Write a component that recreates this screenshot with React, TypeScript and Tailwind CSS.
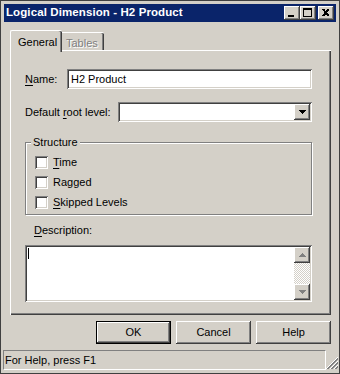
const raised =
  "shadow-[inset_-1px_-1px_0_#404040,inset_1px_1px_0_#ffffff,inset_-2px_-2px_0_#808080,inset_2px_2px_0_#d4d0c8]";
const sunken =
  "shadow-[inset_1px_1px_0_#808080,inset_-1px_-1px_0_#ffffff,inset_2px_2px_0_#404040,inset_-2px_-2px_0_#d4d0c8]";

function U({ children }: { children: string }) {
  return <span className="underline decoration-1 underline-offset-[2px]">{children}</span>;
}

function TitleButton({ kind }: { kind: "min" | "max" | "close" }) {
  return (
    <div className={`w-[16px] h-[14px] bg-[#d4d0c8] ${raised} flex items-center justify-center`}>
      <svg width="16" height="14" viewBox="0 0 16 14" shapeRendering="crispEdges">
        {kind === "min" && <rect x="4" y="9" width="6" height="2" fill="#000" />}
        {kind === "max" && (
          <g fill="#000">
            <rect x="3" y="2" width="9" height="2" />
            <rect x="3" y="2" width="1" height="9" />
            <rect x="11" y="2" width="1" height="9" />
            <rect x="3" y="10" width="9" height="1" />
          </g>
        )}
        {kind === "close" && (
          <g fill="#000">
            <path d="M4 3h2l1 1v1h1V4l1-1h2v1l-2 2v1l2 2v1H9L8 9H7l-1 1H4V9l2-2V6L4 4z" />
          </g>
        )}
      </svg>
    </div>
  );
}

function Checkbox({ label }: { label: React.ReactNode }) {
  return (
    <div className="flex items-center h-[13px] gap-[5px]">
      <div className={`w-[13px] h-[13px] bg-white ${sunken}`} />
      <span className="leading-[13px]">{label}</span>
    </div>
  );
}

function Arrow({ dir }: { dir: "up" | "down" }) {
  return (
    <svg width="7" height="4" viewBox="0 0 7 4" shapeRendering="crispEdges">
      {dir === "down" ? (
        <path d="M0 0h7v1H6v1H5v1H4v1H3V3H2V2H1V1H0z" fill="currentColor" />
      ) : (
        <path d="M3 0h1v1h1v1h1v1h1v1H0V3h1V2h1V1h1z" fill="currentColor" />
      )}
    </svg>
  );
}

function PushButton({ label, isDefault }: { label: string; isDefault?: boolean }) {
  return (
    <div
      className={`w-[75px] h-[23px] flex items-center justify-center bg-[#d4d0c8] ${
        isDefault ? "border border-black" : ""
      }`}
    >
      <div className={`w-full h-full flex items-center justify-center ${raised}`}>{label}</div>
    </div>
  );
}

export default function App() {
  return (
    <div className="w-[340px] h-[374px] bg-[#d4d0c8] border border-[#404040] p-[3px] flex flex-col text-[11px] text-black font-['Liberation_Sans',Arial,sans-serif] overflow-hidden">
      {/* Title bar */}
      <div className="h-[18px] bg-[#0a246a] flex items-center pl-[2px] pr-[2px]">
        <span className="flex-1 text-white font-bold text-[11.5px] leading-none tracking-[0.1px]">
          Logical Dimension - H2 Product
        </span>
        <div className="flex items-center">
          <TitleButton kind="min" />
          <TitleButton kind="max" />
          <div className="w-[2px]" />
          <TitleButton kind="close" />
        </div>
      </div>

      {/* Tabs */}
      <div className="flex items-end h-[20px] mt-[8px] ml-[6px]">
        <div className="relative z-10 h-[22px] -mb-[2px] w-[52px] bg-[#d4d0c8] border-t border-l border-white rounded-tl-[2px] rounded-tr-[2px] shadow-[inset_-1px_0_0_#404040,inset_-2px_0_0_#808080] flex items-start pt-[3px] pl-[7px]">
          General
        </div>
        <div className="h-[18px] w-[42px] border-t border-white shadow-[inset_-1px_0_0_#404040,inset_-2px_0_0_#808080] rounded-tr-[2px] pt-[2px] pl-[4px] text-[#808080] [text-shadow:1px_1px_0_#ffffff]">
          Tables
        </div>
      </div>

      {/* Tab panel */}
      <div className="ml-[6px] mr-[5px] h-[266px] border-t border-l border-white shadow-[inset_-1px_-1px_0_#404040,inset_-2px_-2px_0_#808080] pl-[14px] pr-[19px] pt-[18px] flex flex-col">
        <div className="flex items-center h-[20px]">
          <span className="w-[42px]">
            <U>N</U>ame:
          </span>
          <div className={`flex-1 h-[20px] bg-white ${sunken} flex items-center pl-[4px]`}>H2 Product</div>
        </div>

        <div className="flex items-center h-[20px] mt-[13px]">
          <span className="w-[93px]">
            Default <U>r</U>oot level:
          </span>
          <div className={`flex-1 h-[20px] bg-white ${sunken} flex items-center justify-end p-[2px]`}>
            <div className={`w-[16px] h-[16px] bg-[#d4d0c8] ${raised} flex items-center justify-center text-black`}>
              <Arrow dir="down" />
            </div>
          </div>
        </div>

        {/* Structure group */}
        <div className="relative mt-[20px] h-[73px] border border-[#808080] shadow-[inset_1px_1px_0_#ffffff,1px_1px_0_#ffffff] pl-[9px] pt-[13px] flex flex-col gap-[7px]">
          <span className="absolute -top-[7px] left-[5px] bg-[#d4d0c8] px-[2px] leading-[13px]">Structure</span>
          <Checkbox
            label={
              <>
                <U>T</U>ime
              </>
            }
          />
          <Checkbox label="Ragged" />
          <Checkbox
            label={
              <>
                <U>S</U>kipped Levels
              </>
            }
          />
        </div>

        <div className="mt-[9px] pl-[9px] leading-[13px]">
          <U>D</U>escription:
        </div>

        <div className={`mt-[8px] h-[57px] bg-white ${sunken} flex p-[2px]`}>
          <div className="flex-1 pl-[1px] pt-[1px]">
            <div className="w-px h-[11px] bg-black" />
          </div>
          <div className="w-[16px] flex flex-col">
            <div className={`h-[16px] bg-[#d4d0c8] ${raised} flex items-center justify-center text-[#808080]`}>
              <Arrow dir="up" />
            </div>
            <div className="flex-1 bg-[repeating-conic-gradient(#d4d0c8_0%_25%,#ffffff_0%_50%)] bg-[length:2px_2px]" />
            <div className={`h-[16px] bg-[#d4d0c8] ${raised} flex items-center justify-center text-[#808080]`}>
              <Arrow dir="down" />
            </div>
          </div>
        </div>
      </div>

      {/* Buttons */}
      <div className="flex justify-end gap-[5px] mt-[6px] mr-[5px]">
        <PushButton label="OK" isDefault />
        <PushButton label="Cancel" />
        <PushButton label="Help" />
      </div>

      {/* Status bar */}
      <div className="flex items-end mt-[5px] -ml-[1px] -mr-[2px] h-[21px]">
        <div className="w-[323px] h-[20px] border-t border-l border-[#808080] border-b border-r border-b-white border-r-white flex items-center pl-[1px] leading-none">
          For Help, press F1
        </div>
        <svg width="12" height="12" viewBox="0 0 12 12" shapeRendering="crispEdges" className="mb-[1px]">
          {[0, 4, 8].map((o) => (
            <g key={o}>
              {Array.from({ length: 12 - o }).map((_, i) => (
                <rect key={`w${i}`} x={o + i} y={11 - i} width="1" height="1" fill="#ffffff" />
              ))}
              {Array.from({ length: 11 - o }).map((_, i) => (
                <rect key={`d${i}`} x={o + i + 1} y={11 - i} width="1" height="1" fill="#808080" />
              ))}
              {Array.from({ length: 10 - o }).map((_, i) => (
                <rect key={`e${i}`} x={o + i + 2} y={11 - i} width="1" height="1" fill="#808080" />
              ))}
            </g>
          ))}
        </svg>
      </div>
    </div>
  );
}
